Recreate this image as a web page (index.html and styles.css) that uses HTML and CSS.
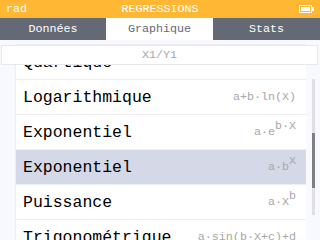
FILE: index.html
```html
<!DOCTYPE html>
<html lang="fr">
<head>
    <meta charset="UTF-8">
    <meta name="viewport" content="width=device-width, initial-scale=1.0">
    <title>Regressions</title>
    <link rel="stylesheet" href="styles.css">
</head>
<body>

<!-- Barre de titre -->
<div class="header">
    <span class="angle">rad</span>
    <span class="title">REGRESSIONS</span>
    <span class="battery">
        <svg width="15" height="8" viewBox="0 0 15 8">
            <rect x="0.5" y="0.5" width="12" height="7" fill="none" stroke="#fff"/>
            <rect x="2" y="2" width="9" height="4" fill="#fff"/>
            <rect x="13" y="2" width="2" height="4" fill="#fff"/>
        </svg>
    </span>
</div>

<!-- Onglets -->
<div class="tabs">
    <div class="tab">Données</div>
    <div class="tab active">Graphique</div>
    <div class="tab">Stats</div>
</div>

<div class="content">
    <div class="banner">X1/Y1</div>

    <div class="scroller">
        <ul class="list">
            <li class="row">
                <span class="name">Quartique</span>
                <span class="formula">a·X<sup>4</sup>+b·X<sup>3</sup>+c·X<sup>2</sup>+d·X+e</span>
            </li>
            <li class="row">
                <span class="name">Logarithmique</span>
                <span class="formula">a+b·ln(X)</span>
            </li>
            <li class="row">
                <span class="name">Exponentiel</span>
                <span class="formula">a·e<sup>b·X</sup></span>
            </li>
            <li class="row selected">
                <span class="name">Exponentiel</span>
                <span class="formula">a·b<sup>X</sup></span>
            </li>
            <li class="row">
                <span class="name">Puissance</span>
                <span class="formula">a·X<sup>b</sup></span>
            </li>
            <li class="row">
                <span class="name">Trigonométrique</span>
                <span class="formula">a·sin(b·X+c)+d</span>
            </li>
        </ul>
        <div class="scrollbar"><div class="thumb"></div></div>
    </div>
</div>

</body>
</html>
```

FILE: styles.css
```css
body {
    margin: 0;
    width: 320px;
    height: 240px;
    overflow: hidden;
    background-color: #f7f9ff;
    font-family: "Liberation Mono", "DejaVu Sans Mono", monospace;
}

.header {
    height: 18px;
    background-color: #ffb734;
    color: #fff;
    font-size: 11.7px;
    display: grid;
    grid-template-columns: 1fr auto 1fr;
    align-items: center;
    padding: 0 6px;
}

.title {
    text-align: center;
}

.battery {
    justify-self: end;
    display: flex;
}

.tabs {
    height: 22px;
    display: grid;
    grid-template-columns: 106px 107px 107px;
    background-color: #656975;
    font-size: 11.7px;
}

.tab {
    color: #fff;
    display: flex;
    align-items: center;
    justify-content: center;
}

.tab.active {
    background-color: #fff;
    color: #656975;
}

.content {
    position: relative;
    height: 200px;
    overflow: hidden;
}

.banner {
    position: absolute;
    top: 5px;
    left: 1px;
    width: 315px;
    height: 18px;
    background-color: #fff;
    border: 1px solid #e8e8ec;
    color: #a7a7a7;
    font-size: 11.7px;
    display: flex;
    align-items: center;
    justify-content: center;
    z-index: 1;
}

.scroller {
    display: flex;
    padding: 4px 0 0 15px;
}

.list {
    list-style: none;
    margin: 0;
    padding: 0;
    width: 290px;
    background-color: #fff;
    border-left: 1px solid #eeeef2;
}

.row {
    height: 34px;
    border-top: 1px solid #eeeef2;
    display: flex;
    align-items: center;
    justify-content: space-between;
    padding: 0 10px 0 7px;
}

.row.selected {
    background-color: #d5d8e6;
}

.name {
    font-size: 16.5px;
    color: #000;
}

.formula {
    font-size: 11.7px;
    color: #a7a7a7;
}

.formula sup {
    font-size: 11.7px;
    vertical-align: 6px;
    line-height: 0;
}

.scrollbar {
    width: 3px;
    height: 136px;
    margin: 35px 0 0 6px;
    background-color: #e2dde6;
}

.thumb {
    height: 55px;
    margin-top: 54px;
    background-color: #7e7e84;
}
```
